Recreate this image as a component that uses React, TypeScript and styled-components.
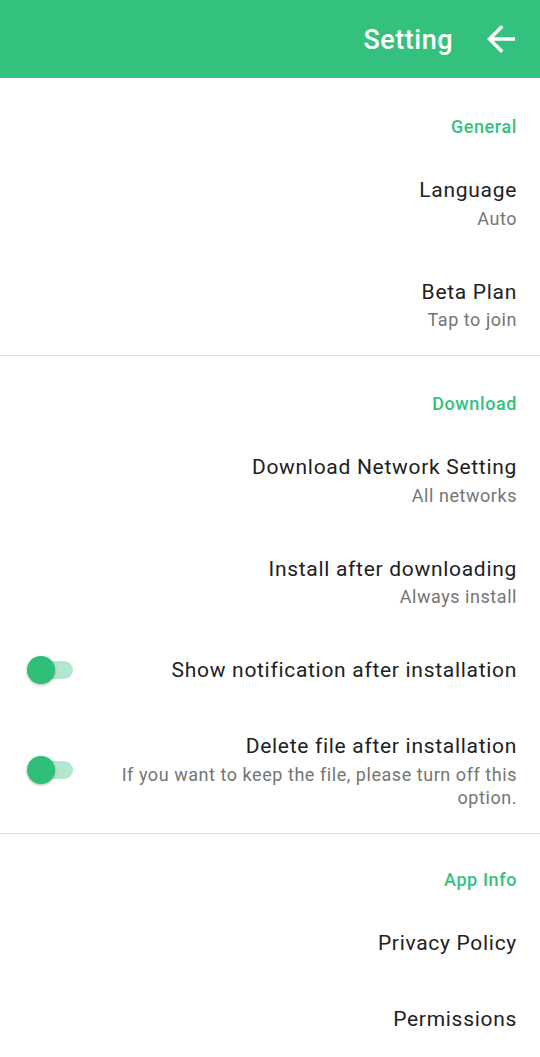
import React from 'react'
import styled, { createGlobalStyle } from 'styled-components'

const GlobalStyle = createGlobalStyle`
body {
  margin: 0;
  background: #ffffff;
  font-family: Roboto, "Noto Sans", sans-serif;
}
`

type Item = {
  title: string;
  subtitle?: string;
  toggle?: boolean;
}

type Section = {
  label: string;
  items: Item[];
}

const sections: Section[] = [
  {
    label: 'General',
    items: [
      { title: 'Language', subtitle: 'Auto' },
      { title: 'Beta Plan', subtitle: 'Tap to join' },
    ],
  },
  {
    label: 'Download',
    items: [
      { title: 'Download Network Setting', subtitle: 'All networks' },
      { title: 'Install after downloading', subtitle: 'Always install' },
      { title: 'Show notification after installation', toggle: true },
      {
        title: 'Delete file after installation',
        subtitle: 'If you want to keep the file, please turn off this option.',
        toggle: true,
      },
    ],
  },
  {
    label: 'App Info',
    items: [
      { title: 'Privacy Policy' },
      { title: 'Permissions' },
    ],
  },
]

const App = () => {
  return (
    <Page>
      <GlobalStyle />
      <TopBar>
        <Title>Setting</Title>
        <BackButton aria-label="back">
          <svg width="42" height="42" viewBox="0 0 24 24" fill="#ffffff">
            <path d="M20 11H7.83l5.59-5.59L12 4l-8 8 8 8 1.41-1.41L7.83 13H20v-2z" />
          </svg>
        </BackButton>
      </TopBar>
      {sections.map((section, sectionIdx) => (
        <Group key={section.label} $first={sectionIdx === 0} $last={sectionIdx === sections.length - 1}>
          <GroupLabel>{section.label}</GroupLabel>
          {section.items.map((item) => (
            <Row key={item.title}>
              {item.toggle ? (
                <Switch>
                  <SwitchTrack />
                  <SwitchThumb />
                </Switch>
              ) : null}
              <RowText>
                <RowTitle>{item.title}</RowTitle>
                {item.subtitle ? <RowSub>{item.subtitle}</RowSub> : null}
              </RowText>
            </Row>
          ))}
        </Group>
      ))}
    </Page>
  )
}

const Page = styled.div`
width: 540px;
min-height: 1057px;
background: #ffffff;
`

const TopBar = styled.header`
height: 78px;
background: #34c17e;
display: flex;
align-items: center;
justify-content: flex-end;
padding-right: 18px;
box-sizing: border-box;
`

const Title = styled.h1`
margin: 0 27px 0 0;
color: #ffffff;
font-size: 27px;
font-weight: 500;
letter-spacing: 0.5px;
line-height: 1;
padding-top: 2px;
`

const BackButton = styled.div`
display: flex;
align-items: center;
`

const Group = styled.section<{ $first: boolean; $last: boolean }>`
padding-top: ${(p) => (p.$first ? '1px' : '0')};
margin-top: ${(p) => (p.$last ? '-2px' : '0')};
border-bottom: ${(p) => (p.$last ? 'none' : '1px solid #dcdcdc')};
`

const GroupLabel = styled.div`
color: #34c17e;
font-size: 18px;
font-weight: 500;
letter-spacing: 0.6px;
line-height: 22px;
text-align: right;
padding: 37px 23px 14px 23px;
`

const Row = styled.div`
display: flex;
align-items: center;
padding: 24px 23px 24px 27px;
`

const RowText = styled.div`
flex: 1;
text-align: right;
padding-left: 40px;
`

const RowTitle = styled.div`
color: #212121;
font-size: 21px;
letter-spacing: 0.7px;
line-height: 28px;
`

const RowSub = styled.div`
color: #757575;
font-size: 18px;
letter-spacing: 0.55px;
line-height: 23px;
margin-top: 2.5px;
`

const Switch = styled.div`
position: relative;
width: 46px;
height: 28px;
flex-shrink: 0;
`

const SwitchTrack = styled.div`
position: absolute;
left: 8px;
right: 0;
top: 5px;
height: 18px;
border-radius: 9px;
background: #b3e7cd;
`

const SwitchThumb = styled.div`
position: absolute;
left: 0;
top: 0;
width: 28px;
height: 28px;
border-radius: 50%;
background: #2fbf78;
box-shadow: 0 1px 3px rgba(0, 0, 0, 0.3);
`

export default App
